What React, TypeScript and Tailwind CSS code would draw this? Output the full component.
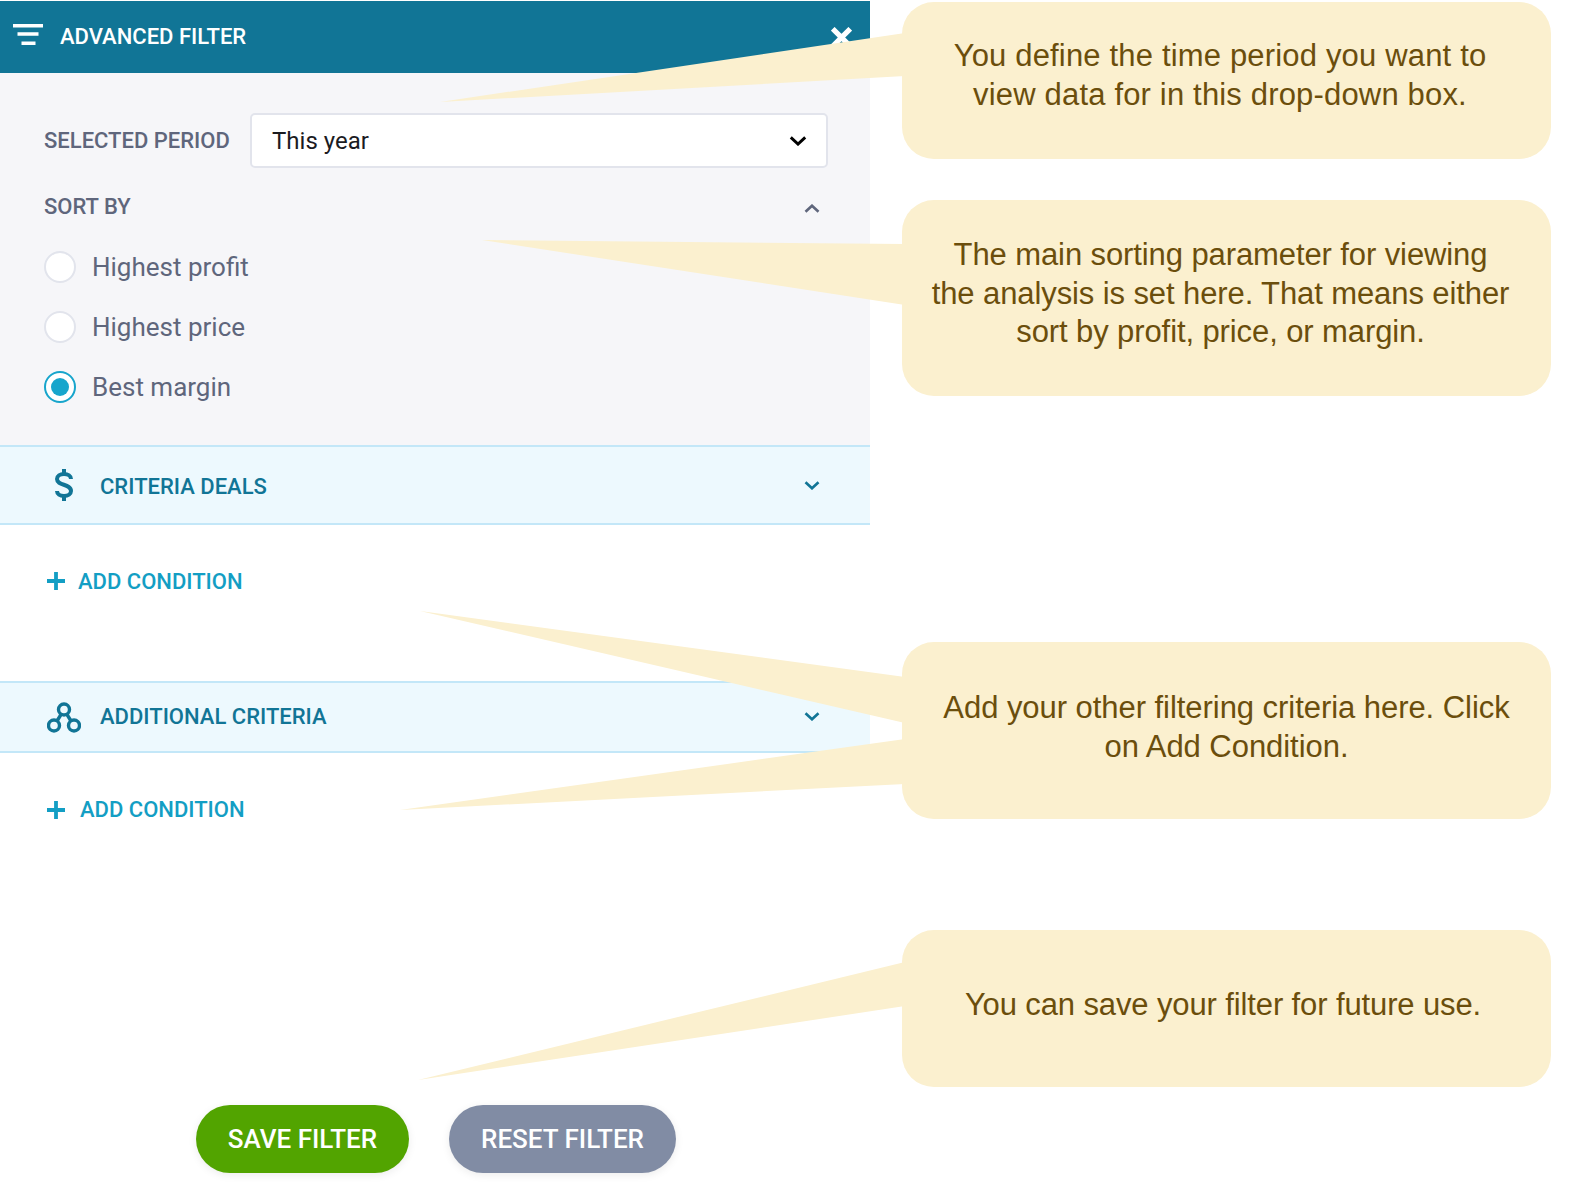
import React from "react";

const Chevron = ({ up = false, className = "" }: { up?: boolean; className?: string }) => (
  <svg viewBox="0 0 16 9" className={className} fill="none" stroke="currentColor" strokeWidth="2.6" strokeLinecap="butt">
    <path d={up ? "M1.5 7.8 8 1.7l6.5 6.1" : "M1.5 1.2 8 7.3l6.5-6.1"} />
  </svg>
);

const Plus = () => (
  <svg viewBox="0 0 18 18" className="w-[18px] h-[18px]" fill="none" stroke="#139ec4" strokeWidth="3.8">
    <path d="M9 0v18M0 9h18" />
  </svg>
);

const Radio = ({ label, checked = false }: { label: string; checked?: boolean }) => (
  <div className="flex items-center h-[31px]">
    <span
      className={`flex items-center justify-center w-[32px] h-[32px] rounded-full bg-white border-2 ${
        checked ? "border-[#17a5cc]" : "border-[#e2e4ec]"
      }`}
    >
      {checked && <span className="block w-[18px] h-[18px] rounded-full bg-[#17a5cc]" />}
    </span>
    <span className="ml-[16px] pt-[1px] text-[26px] text-[#5f667c]">{label}</span>
  </div>
);

const Callout = ({
  className,
  children,
}: {
  className: string;
  children: React.ReactNode;
}) => (
  <div
    className={`rounded-[32px] bg-[#fbf0cf] text-center text-[#6b4e0c] text-[31px] leading-[38.6px] ${className}`}
    style={{ fontFamily: '"Liberation Sans", Arial, sans-serif' }}
  >
    {children}
  </div>
);

export default function App() {
  return (
    <div
      className="relative flex w-[1591px] h-[1201px] bg-white overflow-hidden"
      style={{ fontFamily: "Roboto, sans-serif" }}
    >
      {/* Panel */}
      <div className="flex flex-col w-[870px] h-full pt-px">
        <div className="relative flex items-center h-[72px] pl-[13px] pr-[18px] bg-[#117596] text-white">
          <svg viewBox="0 0 30 21" className="w-[30px] h-[21px] -mt-[5px]" fill="none" stroke="white" strokeWidth="3.4">
            <path d="M0 1.7h30M4.500 10h21M8.500 19.300h14" />
          </svg>
          <span className="ml-[17px] text-[22px] font-medium leading-none">ADVANCED FILTER</span>
          <svg viewBox="0 0 18 18" className="ml-auto w-[21px] h-[21px]" fill="none" stroke="white" strokeWidth="4.4">
            <path d="M1.500 1.500l15 15M16.500 1.500l-15 15" />
          </svg>
        </div>

        <div className="h-[372px] bg-[#f6f6f9] pl-[44px] pr-[42px] pt-[40px]">
          <div className="flex items-center h-[55px]">
            <span className="w-[206px] text-[22px] font-medium text-[#5f667c]">SELECTED PERIOD</span>
            <div className="flex items-center flex-1 h-[55px] pl-[20px] pr-[19px] rounded-[5px] bg-white border-2 border-[#e2e4ec]">
              <span className="text-[24px] text-[#1b1b1f]">This year</span>
              <Chevron className="ml-auto w-[18px] h-[10px] text-black" />
            </div>
          </div>
          <div className="flex items-center justify-between h-[28px] mt-[24px] pr-[8px]">
            <span className="text-[22px] font-medium text-[#5f667c]">SORT BY</span>
            <Chevron up className="w-[16px] h-[9px] text-[#5f667c] mt-[5px]" />
          </div>
          <div className="flex flex-col gap-[29px] mt-[31px]">
            <Radio label="Highest profit" />
            <Radio label="Highest price" />
            <Radio label="Best margin" checked />
          </div>
        </div>

        <div className="flex items-center h-[80px] pl-[55px] pr-[50px] border-y-2 border-[#c3e7f8] bg-[#edf9fe] text-[#117596]">
          <svg viewBox="0 0 18 32" className="w-[18px] h-[32px]" fill="none" stroke="currentColor" strokeWidth="4">
            <path d="M16 10C16 6.800 13 5 9 5S2 7 2 10c0 7 14 4.500 14 12 0 3-3 5-7 5s-7-2-7-5" />
            <path d="M9 0v5M9 27v5" />
          </svg>
          <span className="ml-[27px] pt-[2px] text-[22px] font-medium">CRITERIA DEALS</span>
          <Chevron className="ml-auto w-[16px] h-[9px]" />
        </div>

        <div className="flex items-center h-[156px] pb-[44px] pl-[47px] text-[#139ec4]">
          <Plus />
          <span className="ml-[13px] text-[22px] font-medium">ADD CONDITION</span>
        </div>

        <div className="flex items-center h-[72px] pl-[47px] pr-[50px] border-y-2 border-[#c3e7f8] bg-[#edf9fe] text-[#117596]">
          <svg viewBox="0 0 34 31" className="w-[34px] h-[31px]" fill="none" stroke="currentColor" strokeWidth="3.4">
            <circle cx="17" cy="7.500" r="5.500" />
            <circle cx="7" cy="23.500" r="5.500" />
            <circle cx="27" cy="23.500" r="5.500" />
            <path d="M14 12.500l-4 6.500M20 12.500l4 6.500" />
          </svg>
          <span className="ml-[19px] -mt-[2px] text-[22px] font-medium">ADDITIONAL CRITERIA</span>
          <Chevron className="ml-auto w-[16px] h-[9px] -mt-[2px]" />
        </div>

        <div className="flex items-center pl-[47px] pt-[43px] text-[#139ec4]">
          <Plus />
          <span className="ml-[15px] text-[22px] font-medium leading-[28px]">ADD CONDITION</span>
        </div>

        <div className="flex-1 flex items-end gap-[40px] pl-[196px] pb-[28px]">
          <button className="w-[213px] h-[68px] rounded-full bg-[#52a400] text-white text-[26px] font-medium shadow-[0_2px_8px_rgba(0,0,0,0.08)]">
            SAVE FILTER
          </button>
          <button className="w-[227px] h-[68px] rounded-full bg-[#818ca4] text-white text-[26px] font-medium shadow-[0_2px_8px_rgba(0,0,0,0.08)]">
            RESET FILTER
          </button>
        </div>
      </div>

      {/* Callouts */}
      <div className="flex flex-col w-[649px] ml-[32px] pt-[2px]">
        <Callout className="h-[157px] pt-[35px] pr-[13px] tracking-[0.17px]">
          You define the time period you want to
          <br />
          view data for in this drop-down box.
        </Callout>
        <Callout className="h-[196px] mt-[41px] pt-[36px] pr-[12px] tracking-[-0.1px]">
          The main sorting parameter for viewing
          <br />
          the analysis is set here. That means either
          <br />
          sort by profit, price, or margin.
        </Callout>
        <Callout className="h-[177px] mt-[246px] pt-[47px] tracking-[-0.05px]">
          Add your other filtering criteria here. Click
          <br />
          on Add Condition.
        </Callout>
        <Callout className="h-[157px] mt-[111px] pt-[56px] pr-[7px] tracking-[-0.12px]">
          You can save your filter for future use.
        </Callout>
      </div>

      {/* Pointer tails lying over the panel */}
      <svg className="absolute left-0 top-0 w-[1591px] h-[1201px] pointer-events-none" viewBox="0 0 1591 1201" fill="#fbf0cf">
        <polygon points="440,102 905,33 905,76" />
        <polygon points="482,240 905,244 905,305" />
        <polygon points="420,611 905,677 905,723" />
        <polygon points="400,810 905,739 905,784" />
        <polygon points="418,1080 905,962 905,1006" />
      </svg>
    </div>
  );
}
